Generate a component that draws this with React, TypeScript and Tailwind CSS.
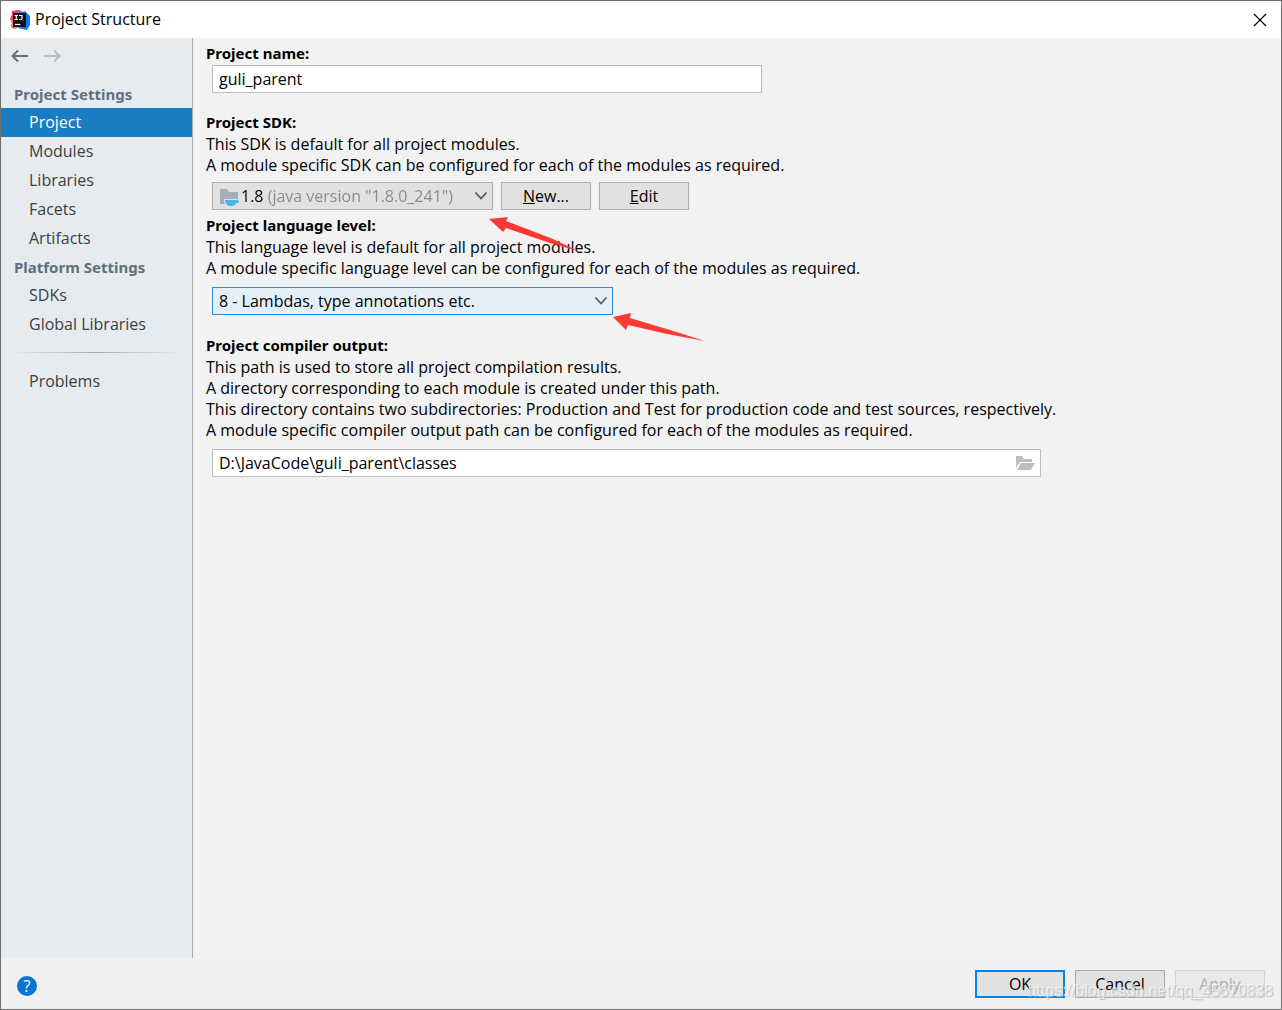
import { useState } from "react";
import type { ReactNode } from "react";

const projectItems = ["Project", "Modules", "Libraries", "Facets", "Artifacts"];
const platformItems = ["SDKs", "Global Libraries"];

function AppLogo() {
  return (
    <svg width="20" height="20" viewBox="0 0 20 20" aria-hidden="true">
      <path d="M2 1l6-1 4 3v9L5 19l-4-2 1-4-2-4 2-4z" fill="#fe315d" />
      <path d="M0 8l3 2 5 7-3 2-4-2 1-4z" fill="#f5766a" />
      <path d="M10 3l5-2 5 5v9l-3 5-9-2z" fill="#087cfa" />
      <path d="M9 0l4 2-1 3-7-2z" fill="#b04bd6" />
      <rect x="3" y="3" width="13" height="14" fill="#111" />
      <path d="M4.500 5.500h3.500M6.250 5.500v4M4.500 9.500h3.500M9 5.500h3v3.200q0 .8-.8.8H9" stroke="#fff" strokeWidth="1.200" fill="none" />
      <path d="M5 14.500h5.500" stroke="#fff" strokeWidth="1.200" />
    </svg>
  );
}

function Chevron() {
  return (
    <svg className="pointer-events-none absolute right-1 top-2" width="14" height="10" viewBox="0 0 14 10" aria-hidden="true">
      <path d="M1.500 1.500 7 7.500l5.500-6" fill="none" stroke="#555" strokeWidth="1.700" />
    </svg>
  );
}

function NavArrow({ forward = false }: { forward?: boolean }) {
  return (
    <button type="button" aria-label={forward ? "Forward" : "Back"} disabled={forward} className={forward ? "text-[#b9bbbd]" : "text-[#6b6b6b]"}>
      <svg width="17" height="14" viewBox="0 0 17 14" fill="none" stroke="currentColor" strokeWidth="2">
        {forward ? <path d="M0 7h15.500M10 1.500 15.500 7 10 12.500" /> : <path d="M17 7H1.500M7 1.500 1.500 7 7 12.500" />}
      </svg>
    </button>
  );
}

const buttonTones = {
  normal: "border border-[#adadad] bg-[#e1e1e1]",
  primary: "border-2 border-[#0a84e0] bg-[#e1e1e1]",
  disabled: "border border-[#d5d5d5] bg-[#e9e9e9] text-[#b0b0b0]",
};

function PushButton({ children, tone = "normal" }: { children: ReactNode; tone?: keyof typeof buttonTones }) {
  return (
    <button type="button" disabled={tone === "disabled"} className={`flex h-7 w-[90px] items-center justify-center ${buttonTones[tone]}`}>
      {children}
    </button>
  );
}

function FieldTitle({ htmlFor, children }: { htmlFor: string; children: ReactNode }) {
  return (
    <label htmlFor={htmlFor} className="block pb-px font-['Noto_Sans',sans-serif] text-[15px] font-bold leading-[21px]">
      {children}
    </label>
  );
}

function NavTitle({ children }: { children: ReactNode }) {
  return <h2 className="h-7 pl-[13px] pt-1 font-['Noto_Sans',sans-serif] text-[15px] font-bold leading-[21px] text-[#5f6f7d]">{children}</h2>;
}

export default function App() {
  const [active, setActive] = useState("Project");
  const [name, setName] = useState("guli_parent");
  const [output, setOutput] = useState("D:\\JavaCode\\guli_parent\\classes");

  const navItem = (label: string) => (
    <button
      key={label}
      type="button"
      onClick={() => setActive(label)}
      className={`block h-[29px] w-full pl-7 text-left ${active === label ? "bg-[#1a7dc4] text-white" : "text-[#3c3f41]"}`}
    >
      {label}
    </button>
  );

  return (
    <div className="flex min-h-screen flex-col border border-[#6e6e6e] bg-[#f2f2f2] font-['Open_Sans',sans-serif] text-base leading-[21px] text-black">
      <header className="flex h-[37px] items-center bg-white pl-[9px] pr-[14px]">
        <AppLogo />
        <h1 className="ml-[5px]">Project Structure</h1>
        <button type="button" aria-label="Close" className="ml-auto">
          <svg width="14" height="14" viewBox="0 0 14 14">
            <path d="M1 1l12 12M13 1 1 13" stroke="#000" strokeWidth="1.200" />
          </svg>
        </button>
      </header>

      <div className="flex grow">
        <nav className="w-48 shrink-0 border-r border-[#a8aaac] bg-[#e6ebf0]">
          <div className="flex h-[42px] items-start gap-4 pl-[10px] pt-[11px]">
            <NavArrow />
            <NavArrow forward />
          </div>
          <NavTitle>Project Settings</NavTitle>
          {projectItems.map(navItem)}
          <NavTitle>Platform Settings</NavTitle>
          {platformItems.map(navItem)}
          <div className="mx-2 mb-[14px] mt-[13px] h-px bg-linear-to-r from-transparent via-[#a8aaac] to-transparent" />
          {navItem("Problems")}
        </nav>

        <main className="min-w-0 grow pl-[13px] pr-6 pt-[5px]">
          <FieldTitle htmlFor="name">Project name:</FieldTitle>
          <input
            id="name"
            value={name}
            onChange={(e) => setName(e.target.value)}
            className="ml-[6px] block h-7 w-[550px] border border-[#bdbdbd] bg-white px-[6px]"
          />

          <section className="mt-[19px]">
            <FieldTitle htmlFor="sdk">Project SDK:</FieldTitle>
            <p>This SDK is default for all project modules.</p>
            <p>A module specific SDK can be configured for each of the modules as required.</p>
            <div className="ml-[6px] mt-[6px] flex gap-2">
              <div className="relative h-7 w-[281px] border border-[#adadad] bg-[#e1e1e1]">
                <svg className="absolute left-[7px] top-[6px]" width="21" height="19" viewBox="0 0 21 19" aria-hidden="true">
                  <path d="M0 0h7l2 3h9v12H0z" fill="#a3b0b9" />
                  <path d="M4 10h16v5h-4q-1 3-4 3H9q-5-1-5-8z" fill="#e1e1e1" />
                  <path d="M5 11h13.500v3H16q-1 3-4 3H9.500Q5.500 16 5 11z" fill="#43b5e6" />
                </svg>
                {/* version is black, the rest of the entry is grey */}
                <select id="sdk" className="block h-[26px] w-full appearance-none bg-[linear-gradient(90deg,#000_51px,#888_51px)] bg-clip-text pl-7 text-transparent">
                  <option className="text-black">1.8 (java version "1.8.0_241")</option>
                </select>
                <Chevron />
              </div>
              <PushButton><span><u>N</u>ew...</span></PushButton>
              <PushButton><span><u>E</u>dit</span></PushButton>
            </div>
          </section>

          <section className="relative mt-[5px]">
            <FieldTitle htmlFor="level">Project language level:</FieldTitle>
            <p>This language level is default for all project modules.</p>
            <p>A module specific language level can be configured for each of the modules as required.</p>
            <div className="relative ml-[6px] mt-2 h-7 w-[401px] border border-[#2b8ddb] bg-[#e3f0fa]">
              <select id="level" className="block h-[26px] w-full appearance-none pl-[6px]">
                <option>8 - Lambdas, type annotations etc.</option>
              </select>
              <Chevron />
            </div>
            <svg className="pointer-events-none absolute left-[282px] top-px" width="220" height="130" viewBox="0 0 220 130" fill="#fc3a35" aria-hidden="true">
              <path d="M1 3l19-2-2 4 47 18 25 12-28-8-44-15-3 4z" />
              <path d="M125 101l18-4-1 5 40 12 35 11-38-7-39-9-2 5z" />
            </svg>
          </section>

          <section className="mt-5">
            <FieldTitle htmlFor="output">Project compiler output:</FieldTitle>
            <p>This path is used to store all project compilation results.</p>
            <p>A directory corresponding to each module is created under this path.</p>
            <p>This directory contains two subdirectories: Production and Test for production code and test sources, respectively.</p>
            <p>A module specific compiler output path can be configured for each of the modules as required.</p>
            <div className="ml-[6px] mt-2 flex h-7 w-[829px] max-w-full items-center border border-[#bdbdbd] bg-white pr-[5px]">
              <input id="output" value={output} onChange={(e) => setOutput(e.target.value)} className="h-[26px] min-w-0 grow px-[6px]" />
              <button type="button" aria-label="Browse">
                <svg width="19" height="15" viewBox="0 0 19 15" fill="#b9c0c5">
                  <path d="M0 0h6l2 3h8v3H4L0 12z" />
                  <path d="M5 7h14l-4 7H1z" />
                </svg>
              </button>
            </div>
          </section>
        </main>
      </div>

      <footer className="relative flex h-[51px] items-start bg-[#f0f0f0] pl-4 pr-4 pt-3">
        <button type="button" aria-label="Help" className="mt-[6px] size-5 rounded-full bg-[#0a74d6] leading-5 text-white">?</button>
        <div className="ml-auto flex gap-[10px]">
          <PushButton tone="primary">OK</PushButton>
          <PushButton>Cancel</PushButton>
          <PushButton tone="disabled">Apply</PushButton>
        </div>
        <span className="pointer-events-none absolute bottom-[6px] right-2 font-['Liberation_Sans',sans-serif] text-base text-white/60 [text-shadow:1px_1px_1px_#bbb]">
          https://blog.csdn.net/qq_45670838
        </span>
      </footer>
    </div>
  );
}
